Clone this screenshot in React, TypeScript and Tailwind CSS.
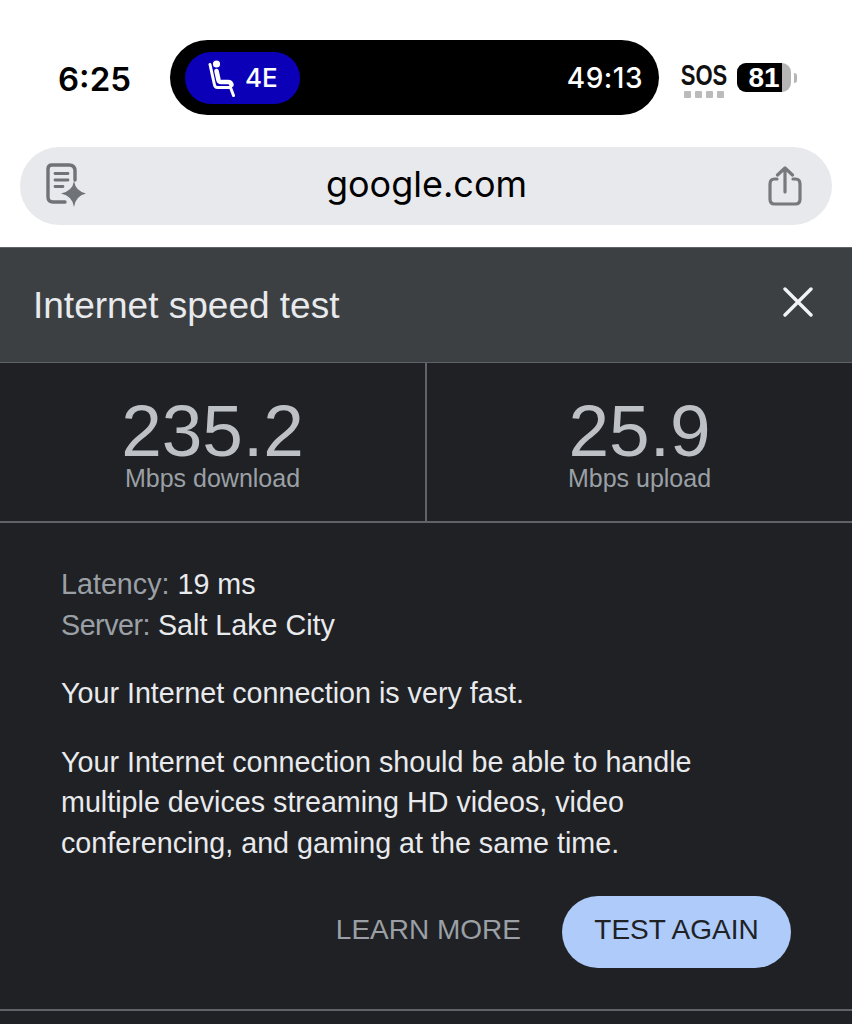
const sans = "font-['Liberation_Sans',Arial,sans-serif]";

function SeatIcon() {
  return (
    <svg width="30" height="38" viewBox="0 0 30 38" fill="none">
      <circle cx="9.5" cy="5" r="3.6" fill="#fff" />
      <path d="M3 5.5 L7.5 26 Q8 28.5 10.5 28.5 L23.5 28.5 L26.5 36.5" stroke="#fff" strokeWidth="3" strokeLinecap="round" strokeLinejoin="round" />
      <path d="M9.5 12 L11.5 21 Q12 23 14 23 L21 23 Q24 23 24.5 26" stroke="#fff" strokeWidth="4.6" strokeLinecap="round" strokeLinejoin="round" />
    </svg>
  );
}

function NotesIcon() {
  return (
    <svg width="42" height="46" viewBox="0 0 42 46" fill="none">
      <path d="M19 39 H7 Q2 39 2 34 V6 Q2 2 6 2 H23 Q29 2 29 8 V17" stroke="#6f7276" strokeWidth="3.4" strokeLinecap="round" />
      <path d="M9 10.5 H22 M9 17 H22 M9 23.5 H17" stroke="#6f7276" strokeWidth="2.8" strokeLinecap="round" />
      <path d="M28 18 Q29.5 28 40 30.5 Q29.5 33 28 44 Q26.5 33 15 30.5 Q26.5 28 28 18 Z" fill="#6f7276" />
    </svg>
  );
}

function ShareIcon() {
  return (
    <svg width="34" height="40" viewBox="0 0 34 40" fill="none" stroke="#77797d" strokeWidth="3.2" strokeLinecap="round" strokeLinejoin="round">
      <path d="M9 13 H6.5 Q2 13 2 18 V33 Q2 38 6.5 38 H27.5 Q32 38 32 33 V18 Q32 13 27.5 13 H25" />
      <path d="M17 26 V2 M9.5 9 L17 2 L24.5 9" />
    </svg>
  );
}

function StatusBar() {
  return (
    <div className="flex h-[147px] items-start">
      <span className="ml-[58px] mt-[59px] w-[112px] font-['Inter',sans-serif] text-[33px] leading-[40px] font-semibold text-black">6:25</span>
      <div className="mt-[40px] flex h-[75px] w-[489px] items-center justify-between rounded-[38px] bg-black pl-[15px] pr-[16px]">
        <div className="flex h-[52px] w-[115px] items-center rounded-[26px] bg-[#0b00b8] pl-[22px]">
          <SeatIcon />
          <span className="ml-[8px] font-['Inter',sans-serif] text-[26px] font-medium text-white">4E</span>
        </div>
        <span className="font-['Inter',sans-serif] text-[28px] font-medium tracking-[0.5px] text-white">49:13</span>
      </div>
      <div className="ml-[23px] mt-[61px] flex w-[44px] flex-col items-center">
        <span className={`${sans} flex h-[28px] w-[44px] scale-x-[0.76] justify-center whitespace-nowrap text-[29px] leading-[28px] font-bold text-[#111]`}>SOS</span>
        <div className="mt-[2px] flex gap-[4px]">
          <i className="h-[7px] w-[7px] rounded-[1px] bg-[#bbbbbb]" />
          <i className="h-[7px] w-[7px] rounded-[1px] bg-[#bbbbbb]" />
          <i className="h-[7px] w-[7px] rounded-[1px] bg-[#bbbbbb]" />
          <i className="h-[7px] w-[7px] rounded-[1px] bg-[#bbbbbb]" />
        </div>
      </div>
      <div className="ml-[11px] mt-[63px] flex items-center">
        <div className="flex h-[29px] w-[54px] overflow-hidden rounded-[9px] bg-[#b5b5b5]">
          <div className="flex w-[45px] items-center justify-center bg-black pl-[9px]">
            <span className={`${sans} text-[28px] font-bold text-white`}>81</span>
          </div>
        </div>
        <div className="ml-[3px] h-[10px] w-[3px] rounded-r-[3px] bg-[#b5b5b5]" />
      </div>
    </div>
  );
}

function AddressBar() {
  return (
    <div className="px-[20px]">
      <div className="flex h-[78px] items-center justify-between rounded-[39px] bg-[#e8e9ed] pl-[26px] pr-[30px]">
        <NotesIcon />
        <span className="mb-[4px] mr-[3px] font-['Inter',sans-serif] text-[36px] text-black">google.com</span>
        <ShareIcon />
      </div>
    </div>
  );
}

function Stat({ value, label }: { value: string; label: string }) {
  return (
    <div className="flex flex-1 flex-col items-center pt-[35px]">
      <span className={`${sans} text-[73px] leading-[66px] text-[#bdc1c6]`}>{value}</span>
      <span className={`${sans} text-[25px] leading-[28px] text-[#9aa0a6]`}>{label}</span>
    </div>
  );
}

export default function App() {
  return (
    <div className={`${sans} h-[1024px] w-[852px] overflow-hidden bg-white`}>
      <StatusBar />
      <AddressBar />
      <div className="mt-[22px] bg-[#202124]">
        <div className="flex h-[116px] items-center justify-between border-y border-[#5f6368] bg-[#3c4043] pl-[33px] pr-[39px]">
          <span className="mt-[2px] text-[37px] text-[#e8eaed]">Internet speed test</span>
          <svg className="mb-[7px]" width="30" height="30" viewBox="0 0 30 30" stroke="#f1f3f4" strokeWidth="3.4" strokeLinecap="round">
            <path d="M2 2 L28 28 M28 2 L2 28" />
          </svg>
        </div>
        <div className="flex h-[160px] border-b-2 border-[#5f6368]">
          <div className="flex flex-1 border-r-2 border-[#5f6368]">
            <Stat value="235.2" label="Mbps download" />
          </div>
          <div className="flex flex-1">
            <Stat value="25.9" label="Mbps upload" />
          </div>
        </div>
        <div className="h-[502px] px-[61px] pt-[41px] text-[28.7px] leading-[40.5px] text-[#e8eaed]">
          <p>
            <span className="text-[#9aa0a6]">Latency:</span> 19 ms
          </p>
          <p>
            <span className="tracking-[-0.5px] text-[#9aa0a6]">Server:</span> Salt Lake City
          </p>
          <p className="mt-[28px]">Your Internet connection is very fast.</p>
          <p className="mt-[28px]">
            Your Internet connection should be able to handle
            <br />
            multiple devices streaming HD videos, video
            <br />
            conferencing, and gaming at the same time.
          </p>
          <div className="mt-[33px] flex items-center justify-end">
            <span className="pb-[3px] text-[28px] text-[#9aa0a6]">LEARN MORE</span>
            <div className="ml-[41px] flex h-[72px] w-[229px] items-center justify-center rounded-[36px] bg-[#aecbfa] pb-[3px] text-[28px] text-[#202124]">
              TEST AGAIN
            </div>
          </div>
          <div className="mx-[-61px] mt-[41px] border-t-2 border-[#5f6368]" />
        </div>
      </div>
    </div>
  );
}
